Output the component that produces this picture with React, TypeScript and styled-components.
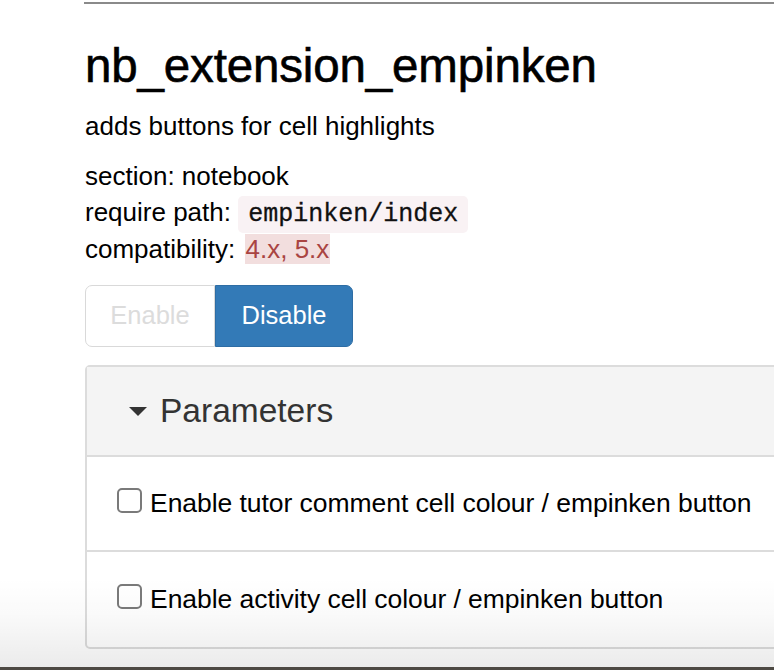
import React from "react";
import styled, { createGlobalStyle } from "styled-components";

const Global = createGlobalStyle`
  html, body { margin: 0; padding: 0; background: #fff; }
  body { width: 774px; height: 670px; overflow: hidden; font-family: "Liberation Sans", Arial, sans-serif; color: #000; }
`;

const Page = styled.div`
  position: relative;
  width: 774px;
  height: 670px;
  overflow: hidden;
  padding-left: 84px;
  box-sizing: border-box;
`;

const TopRule = styled.div`
  height: 2px;
  margin-top: 2px;
  background: #8a8a8a;
`;

const Content = styled.div`
  padding-left: 1px;
`;

const Title = styled.h3`
  margin: 34px 0 0;
  font-size: 47.5px;
  font-weight: normal;
  line-height: 56px;
  letter-spacing: -0.15px;
  -webkit-text-stroke: 0.6px #000;
`;

const Desc = styled.p`
  margin: 15px 0 0;
  font-size: 26px;
  line-height: 34px;
`;

const Meta = styled.div`
  margin-top: 16px;
  font-size: 26px;
  line-height: 35.5px;
`;

const Code = styled.code`
  font-family: "Liberation Mono", "Courier New", monospace;
  font-size: 25px;
  background: #f9f2f4;
  color: #111;
  padding: 4px 10px;
  border-radius: 5px;
  -webkit-text-stroke: 0.3px #111;
`;

const Compat = styled.span`
  color: #a94442;
  background: #f2dede;
  margin-left: 2px;
  padding: 0 1px;
`;

const BtnGroup = styled.div`
  display: flex;
  margin-top: 17px;
`;

const Btn = styled.button<{ $active?: boolean }>`
  font-family: "Liberation Sans", Arial, sans-serif;
  font-size: 25.5px;
  height: 62px;
  padding: 0 24px;
  border: 1px solid ${(p) => (p.$active ? "#2e6da4" : "#d9d9d9")};
  background: ${(p) => (p.$active ? "#337ab7" : "#fff")};
  color: ${(p) => (p.$active ? "#fff" : "#dcdcdc")};
  border-radius: ${(p) => (p.$active ? "0 7px 7px 0" : "7px 0 0 7px")};
  width: ${(p) => (p.$active ? "138px" : "130px")};
  margin: 0;
`;

const Panel = styled.div`
  margin-top: 18px;
  width: 740px;
  border: 2px solid #dcdcdc;
  border-radius: 5px;
  background: #fff;
`;

const PanelHead = styled.div`
  height: 88px;
  background: #f4f4f4;
  border-bottom: 2px solid #dcdcdc;
  display: flex;
  align-items: center;
  padding-left: 42px;
  gap: 13px;
  font-size: 33.5px;
  color: #333;
`;

const Caret = styled.span`
  width: 0;
  height: 0;
  border-left: 9px solid transparent;
  border-right: 9px solid transparent;
  border-top: 9px solid #333;
  margin-top: 2px;
`;

const Row = styled.label<{ $last?: boolean }>`
  display: flex;
  align-items: center;
  gap: 8px;
  height: ${(p) => (p.$last ? "95px" : "93px")};
  padding-left: 30px;
  border-bottom: ${(p) => (p.$last ? "none" : "2px solid #dcdcdc")};
  font-size: 26.5px;
  letter-spacing: -0.05px;
`;

const Check = styled.input`
  appearance: none;
  margin: -6px 0 0;
  width: 25px;
  height: 25px;
  border: 2px solid #7a7a7a;
  border-radius: 5px;
  background: #fff;
  box-sizing: border-box;
`;

const Shade = styled.div`
  position: absolute;
  left: 0;
  right: 0;
  bottom: 3px;
  height: 90px;
  background: linear-gradient(to bottom, rgba(0,0,0,0) 0%, rgba(0,0,0,0.02) 40%, rgba(0,0,0,0.08) 100%);
  pointer-events: none;
`;

const Frame = styled.div`
  position: absolute;
  left: 0;
  right: 0;
  bottom: 0;
  height: 3px;
  background: #4d4943;
`;

export default function App() {
  return (
    <>
      <Global />
      <Page>
        <TopRule />
        <Content>
          <Title>nb_extension_empinken</Title>
          <Desc>adds buttons for cell highlights</Desc>
          <Meta>
            <div>section: notebook</div>
            <div>
              require path: <Code>empinken/index</Code>
            </div>
            <div>
              compatibility: <Compat>4.x, 5.x</Compat>
            </div>
          </Meta>
          <BtnGroup>
            <Btn>Enable</Btn>
            <Btn $active>Disable</Btn>
          </BtnGroup>
          <Panel>
            <PanelHead>
              <Caret />
              Parameters
            </PanelHead>
            <Row>
              <Check type="checkbox" />
              Enable tutor comment cell colour / empinken button
            </Row>
            <Row $last>
              <Check type="checkbox" />
              Enable activity cell colour / empinken button
            </Row>
          </Panel>
        </Content>
        <Shade />
        <Frame />
      </Page>
    </>
  );
}
